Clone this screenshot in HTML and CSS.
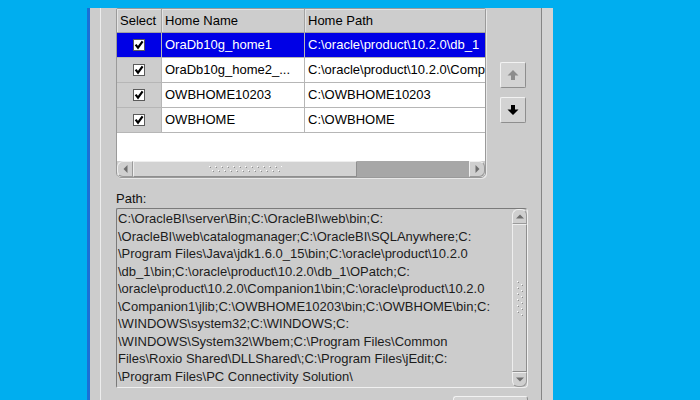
FILE: index.html
```html
<!DOCTYPE html>
<html>
<head>
<meta charset="utf-8">
<link rel="stylesheet" href="styles.css">
</head>
<body>
<div class="screen">
  <div class="window">
    <div class="gutter"></div>
    <div class="panel">
      <div class="toprow">
        <div class="scrollpane">
          <div class="viewport">
            <div class="grid">
              <div class="h">Select</div>
              <div class="h">Home Name</div>
              <div class="h">Home Path</div>

              <div class="c sel on"><svg width="12" height="12" viewBox="0 0 12 12"><rect x="0.5" y="0.5" width="11" height="11" fill="#fff" stroke="#5a5a5a"/><path d="M2.6 5.6 L5 8.6 L9.6 2.4" fill="none" stroke="#000" stroke-width="2.2"/></svg></div>
              <div class="c on">OraDb10g_home1</div>
              <div class="c on">C:\oracle\product\10.2.0\db_1</div>

              <div class="c sel"><svg width="12" height="12" viewBox="0 0 12 12"><rect x="0.5" y="0.5" width="11" height="11" fill="#fff" stroke="#5a5a5a"/><path d="M2.6 5.6 L5 8.6 L9.6 2.4" fill="none" stroke="#000" stroke-width="2.2"/></svg></div>
              <div class="c">OraDb10g_home2_...</div>
              <div class="c">C:\oracle\product\10.2.0\Companion1</div>

              <div class="c sel"><svg width="12" height="12" viewBox="0 0 12 12"><rect x="0.5" y="0.5" width="11" height="11" fill="#fff" stroke="#5a5a5a"/><path d="M2.6 5.6 L5 8.6 L9.6 2.4" fill="none" stroke="#000" stroke-width="2.2"/></svg></div>
              <div class="c">OWBHOME10203</div>
              <div class="c">C:\OWBHOME10203</div>

              <div class="c sel"><svg width="12" height="12" viewBox="0 0 12 12"><rect x="0.5" y="0.5" width="11" height="11" fill="#fff" stroke="#5a5a5a"/><path d="M2.6 5.6 L5 8.6 L9.6 2.4" fill="none" stroke="#000" stroke-width="2.2"/></svg></div>
              <div class="c">OWBHOME</div>
              <div class="c">C:\OWBHOME</div>
            </div>
          </div>
          <div class="hscroll">
            <div class="hs-btn hs-left"><svg width="5" height="8" viewBox="0 0 5 8"><path d="M4.5 0 L4.5 8 L0.5 4 Z" fill="#6e6e6e"/></svg></div>
            <div class="hs-thumb"><svg width="74" height="8" viewBox="0 0 74 8"><defs><pattern id="hg" width="6" height="8" patternUnits="userSpaceOnUse"><rect x="1" y="1" width="1" height="1" fill="#fff"/><rect x="2" y="2" width="1" height="1" fill="#8c8c8c"/><rect x="4" y="5" width="1" height="1" fill="#fff"/><rect x="5" y="6" width="1" height="1" fill="#8c8c8c"/></pattern></defs><rect width="74" height="8" fill="url(#hg)"/></svg></div>
            <div class="hs-track"></div>
            <div class="hs-btn hs-right"><svg width="5" height="8" viewBox="0 0 5 8"><path d="M0.5 0 L0.5 8 L4.5 4 Z" fill="#6e6e6e"/></svg></div>
          </div>
        </div>
        <div class="movebtns">
          <div class="mbtn"><svg width="12" height="12" viewBox="0 0 12 12"><path d="M6 1 L11.5 6.5 L8 6.5 L8 11 L4 11 L4 6.5 L0.5 6.5 Z" fill="#8c8c8c"/></svg></div>
          <div class="mbtn"><svg width="12" height="12" viewBox="0 0 12 12"><path d="M6 11 L11.5 5.5 L8 5.5 L8 1 L4 1 L4 5.5 L0.5 5.5 Z" fill="#000"/></svg></div>
        </div>
      </div>

      <div class="label">Path:</div>

      <div class="textarea">
        <div class="lines">
          <div>C:\OracleBI\server\Bin;C:\OracleBI\web\bin;C:</div>
          <div>\OracleBI\web\catalogmanager;C:\OracleBI\SQLAnywhere;C:</div>
          <div>\Program Files\Java\jdk1.6.0_15\bin;C:\oracle\product\10.2.0</div>
          <div>\db_1\bin;C:\oracle\product\10.2.0\db_1\OPatch;C:</div>
          <div>\oracle\product\10.2.0\Companion1\bin;C:\oracle\product\10.2.0</div>
          <div>\Companion1\jlib;C:\OWBHOME10203\bin;C:\OWBHOME\bin;C:</div>
          <div>\WINDOWS\system32;C:\WINDOWS;C:</div>
          <div>\WINDOWS\System32\Wbem;C:\Program Files\Common</div>
          <div>Files\Roxio Shared\DLLShared\;C:\Program Files\jEdit;C:</div>
          <div>\Program Files\PC Connectivity Solution\</div>
        </div>
        <div class="vscroll">
          <div class="vs-btn vs-up"><svg width="8" height="5" viewBox="0 0 8 5"><path d="M0 4.5 L8 4.5 L4 0.5 Z" fill="#6e6e6e"/></svg></div>
          <div class="vs-thumb"><svg width="8" height="36" viewBox="0 0 8 36"><defs><pattern id="vg" width="8" height="6" patternUnits="userSpaceOnUse"><rect x="1" y="1" width="1" height="1" fill="#fff"/><rect x="2" y="2" width="1" height="1" fill="#8c8c8c"/><rect x="5" y="4" width="1" height="1" fill="#fff"/><rect x="6" y="5" width="1" height="1" fill="#8c8c8c"/></pattern></defs><rect width="8" height="36" fill="url(#vg)"/></svg></div>
          <div class="vs-btn vs-down"><svg width="8" height="5" viewBox="0 0 8 5"><path d="M0 0.5 L8 0.5 L4 4.5 Z" fill="#6e6e6e"/></svg></div>
        </div>
      </div>

      <div class="bottom"><div class="btn"></div></div>
    </div>
    <div class="rightstrip"></div>
  </div>
</div>
</body>
</html>
```

FILE: styles.css
```css
* { box-sizing: border-box; }
html, body { margin: 0; padding: 0; }
body {
  width: 700px;
  height: 400px;
  overflow: hidden;
  background: #00aeef;
  font-family: "Liberation Sans", Arial, sans-serif;
  font-size: 13px;
  color: #000;
}
.screen {
  display: flex;
  padding-top: 8px;
  padding-left: 87px;
  height: 400px;
}
.window {
  display: flex;
  width: 466px;
  height: 392px;
  border-left: 3px solid #1a6fd6;
  background: #cccccc;
  overflow: hidden;
}
.gutter {
  flex: none;
  width: 11px;
  border-right: 1px solid #ededed;
}
.panel {
  flex: none;
  width: 441px;
  border-right: 1px solid #858585;
  padding-left: 15px;
  display: flex;
  flex-direction: column;
  overflow: hidden;
}
.panel > * { flex: none; }
.rightstrip {
  flex: 1;
  background: #d3d3d3;
}

/* table */
.toprow { display: flex; align-items: flex-start; }
.scrollpane {
  flex: none;
  width: 370px;
  height: 170px;
  border: 1px solid #9a9a9a;
  border-radius: 2px 2px 5px 5px;
  display: flex;
  flex-direction: column;
  background: #fff;
  overflow: hidden;
  box-shadow: 1px 1px 0 #e8e8e8;
}
.viewport {
  flex: none;
  height: 152px;
  overflow: hidden;
  background: #fff;
}
.grid {
  display: grid;
  width: 448px;
  grid-template-columns: 45px 143px 260px;
}
.h {
  height: 24px;
  line-height: 23px;
  padding-left: 3px;
  background: #cdcdcd;
  border-right: 1px solid #a2a2a2;
  border-bottom: 1px solid #a2a2a2;
  box-shadow: inset 1px 1px 0 #e4e4e4;
  white-space: nowrap;
  overflow: hidden;
}
.c {
  height: 25px;
  line-height: 24px;
  padding-left: 3px;
  border-right: 1px solid #b6b6b6;
  border-bottom: 1px solid #b6b6b6;
  white-space: nowrap;
  overflow: hidden;
  background: #fff;
}
.c.sel {
  background: #cdcdcd;
  padding-left: 0;
  display: flex;
  align-items: center;
  justify-content: center;
}
.c.on {
  background: #0000e6;
  color: #fff;
}

/* horizontal scrollbar */
.hscroll {
  flex: none;
  display: flex;
  height: 16px;
  background: #cdcdcd;
}
.hs-btn {
  flex: none;
  width: 16px;
  height: 16px;
  background: #cfcfcf;
  border: 1px solid #f0f0f0;
  border-right-color: #9a9a9a;
  border-bottom-color: #9a9a9a;
  display: flex;
  align-items: center;
  justify-content: center;
}
.hs-left { border-radius: 6px 0 0 6px; }
.hs-right { border-radius: 0 6px 6px 0; }
.hs-thumb {
  flex: none;
  width: 224px;
  background: #d2d2d2;
  border: 1px solid #eeeeee;
  border-right-color: #8e8e8e;
  border-bottom-color: #8e8e8e;
  display: flex;
  align-items: center;
  justify-content: center;
}
.hs-track {
  flex: none;
  width: 112px;
  background: #a7a7a7;
}

/* move buttons */
.movebtns {
  flex: none;
  margin-left: 14px;
  margin-top: 54px;
  display: flex;
  flex-direction: column;
  gap: 9px;
}
.mbtn {
  width: 26px;
  height: 26px;
  background: #d3d3d3;
  border: 1px solid #f2f2f2;
  border-right-color: #8e8e8e;
  border-bottom-color: #8e8e8e;
  border-radius: 2px;
  display: flex;
  align-items: center;
  justify-content: center;
}

/* path */
.label {
  margin-top: 13px;
  height: 16px;
  line-height: 16px;
  margin-bottom: 1px;
  color: #111;
}
.textarea {
  width: 412px;
  height: 180px;
  border: 1px solid;
  border-color: #7a7a7a #f0f0f0 #f0f0f0 #7a7a7a;
  border-radius: 2px 4px 4px 2px;
  display: flex;
}
.lines {
  flex: 1;
  padding: 1px 0 0 1px;
  line-height: 17.5px;
  white-space: nowrap;
  overflow: hidden;
  color: #1c1c1c;
}
.vscroll {
  flex: none;
  width: 15px;
  display: flex;
  flex-direction: column;
}
.vs-btn {
  flex: none;
  height: 15px;
  background: #cfcfcf;
  border: 1px solid #f0f0f0;
  border-right-color: #9a9a9a;
  border-bottom-color: #9a9a9a;
  display: flex;
  align-items: center;
  justify-content: center;
}
.vs-up { border-radius: 6px 6px 0 0; }
.vs-down { border-radius: 0 0 6px 6px; }
.vs-thumb {
  flex: 1;
  background: #d0d0d0;
  border: 1px solid #eeeeee;
  border-right-color: #8e8e8e;
  border-bottom-color: #8e8e8e;
  display: flex;
  align-items: center;
  justify-content: center;
}

/* bottom button */
.bottom {
  margin-top: 8px;
  width: 412px;
  display: flex;
  justify-content: flex-end;
}
.btn {
  width: 75px;
  height: 26px;
  background: #d3d3d3;
  border: 1px solid #f2f2f2;
  border-right-color: #8e8e8e;
  border-bottom-color: #8e8e8e;
  border-radius: 3px;
}
```
